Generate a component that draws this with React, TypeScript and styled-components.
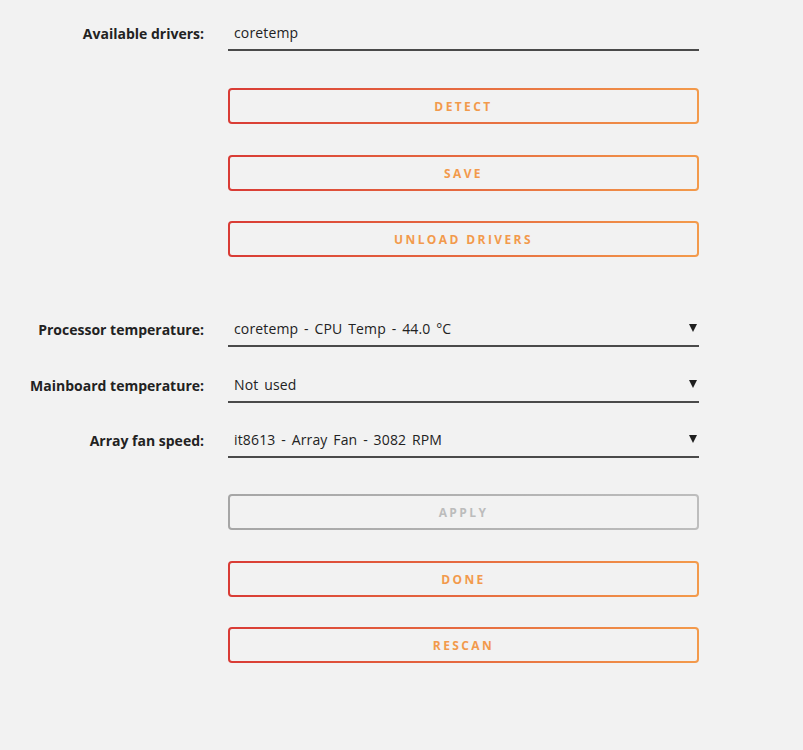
import React from 'react'
import styled, { createGlobalStyle, css } from 'styled-components'

const GlobalStyle = createGlobalStyle`
    body {
        margin: 0;
        background: #f2f2f2;
        font-family: "Open Sans", "Liberation Sans", sans-serif;
        color: #1c1c1c;
    }
`

const Page = styled.div`
    width: 803px;
    min-height: 750px;
    padding-top: 16px;
    box-sizing: border-box;
`

const Row = styled.div<{ $top?: number }>`
    display: grid;
    grid-template-columns: 204px 471px;
    column-gap: 24px;
    align-items: center;
    margin-top: ${p => p.$top ?? 0}px;
`

const Label = styled.label`
    text-align: right;
    font-weight: 700;
    font-size: 14px;
    color: #222;
`

const Field = styled.div`
    position: relative;
    height: 35px;
    border-bottom: 2px solid #4a4a4a;
    box-sizing: border-box;
    display: flex;
    align-items: center;
    padding: 0 6px;
    font-size: 14px;
    letter-spacing: 0.15px;
    word-spacing: 2px;
    color: #222;
`

const Arrow = styled.span`
    position: absolute;
    right: 2px;
    top: 12px;
    width: 0;
    height: 0;
    border-left: 4px solid transparent;
    border-right: 4px solid transparent;
    border-top: 8px solid #1f1f1f;
`

const Button = styled.button<{ $disabled?: boolean }>`
    grid-column: 2;
    height: 36px;
    border: 2px solid transparent;
    border-radius: 4px;
    font-family: "Open Sans", "Liberation Sans", sans-serif;
    font-weight: 700;
    font-size: 12px;
    letter-spacing: 2.4px;
    text-transform: uppercase;
    cursor: pointer;
    ${p => p.$disabled
        ? css`
            color: #bcbcbc;
            background: linear-gradient(#f2f2f2, #f2f2f2) padding-box,
                linear-gradient(90deg, #a6a6a6, #bdbdbd) border-box;
        `
        : css`
            color: #f29a4c;
            background: linear-gradient(#f2f2f2, #f2f2f2) padding-box,
                linear-gradient(90deg, #d93b35, #f39a4b) border-box;
        `}
`

const ButtonRow = ({ top, label, disabled }: { top: number, label: string, disabled?: boolean }) => (
    <Row $top={top}>
        <Button $disabled={disabled}>{label}</Button>
    </Row>
)

const SelectRow = ({ top, label, value }: { top: number, label: string, value: string }) => (
    <Row $top={top}>
        <Label>{label}</Label>
        <Field>
            {value}
            <Arrow />
        </Field>
    </Row>
)

const App = () => (
    <Page>
        <GlobalStyle />
        <Row>
            <Label>Available drivers:</Label>
            <Field>coretemp</Field>
        </Row>
        <ButtonRow top={37} label="Detect" />
        <ButtonRow top={31} label="Save" />
        <ButtonRow top={30} label="Unload drivers" />
        <SelectRow top={55} label="Processor temperature:" value="coretemp - CPU Temp - 44.0 °C" />
        <SelectRow top={21} label="Mainboard temperature:" value="Not used" />
        <SelectRow top={20} label="Array fan speed:" value="it8613 - Array Fan - 3082 RPM" />
        <ButtonRow top={36} label="Apply" disabled />
        <ButtonRow top={31} label="Done" />
        <ButtonRow top={30} label="Rescan" />
    </Page>
)

export default App
